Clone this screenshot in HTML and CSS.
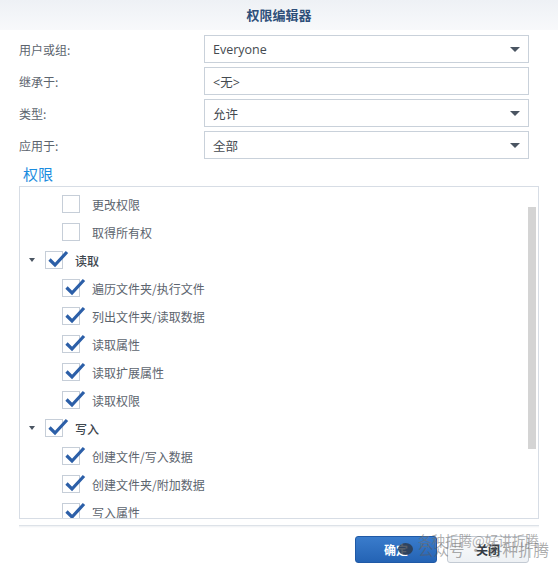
FILE: index.html
```html
<!DOCTYPE html>
<html lang="zh">
<head>
<meta charset="utf-8">
<title>权限编辑器</title>
<link rel="stylesheet" href="styles.css">
</head>
<body>
<div class="dialog">
  <div class="header">权限编辑器</div>
  <div class="form">
    <div class="label">用户或组:</div>
    <div class="field select"><span>Everyone</span><i class="caret"></i></div>
    <div class="label">继承于:</div>
    <div class="field"><span>&lt;无&gt;</span></div>
    <div class="label">类型:</div>
    <div class="field select"><span>允许</span><i class="caret"></i></div>
    <div class="label">应用于:</div>
    <div class="field select"><span>全部</span><i class="caret"></i></div>
  </div>
  <div class="section-title">权限</div>
  <div class="panel">
    <div class="list">
      <div class="row child"><span class="box"></span><span class="txt">更改权限</span></div>
      <div class="row child"><span class="box"></span><span class="txt">取得所有权</span></div>
      <div class="row parent"><i class="toggle"></i><span class="box checked"><svg viewBox="0 0 22 18"><path d="M2.5 9.5 L8 15 L20 2"/></svg></span><span class="txt">读取</span></div>
      <div class="row child"><span class="box checked"><svg viewBox="0 0 22 18"><path d="M2.5 9.5 L8 15 L20 2"/></svg></span><span class="txt">遍历文件夹/执行文件</span></div>
      <div class="row child"><span class="box checked"><svg viewBox="0 0 22 18"><path d="M2.5 9.5 L8 15 L20 2"/></svg></span><span class="txt">列出文件夹/读取数据</span></div>
      <div class="row child"><span class="box checked"><svg viewBox="0 0 22 18"><path d="M2.5 9.5 L8 15 L20 2"/></svg></span><span class="txt">读取属性</span></div>
      <div class="row child"><span class="box checked"><svg viewBox="0 0 22 18"><path d="M2.5 9.5 L8 15 L20 2"/></svg></span><span class="txt">读取扩展属性</span></div>
      <div class="row child"><span class="box checked"><svg viewBox="0 0 22 18"><path d="M2.5 9.5 L8 15 L20 2"/></svg></span><span class="txt">读取权限</span></div>
      <div class="row parent"><i class="toggle"></i><span class="box checked"><svg viewBox="0 0 22 18"><path d="M2.5 9.5 L8 15 L20 2"/></svg></span><span class="txt">写入</span></div>
      <div class="row child"><span class="box checked"><svg viewBox="0 0 22 18"><path d="M2.5 9.5 L8 15 L20 2"/></svg></span><span class="txt">创建文件/写入数据</span></div>
      <div class="row child"><span class="box checked"><svg viewBox="0 0 22 18"><path d="M2.5 9.5 L8 15 L20 2"/></svg></span><span class="txt">创建文件夹/附加数据</span></div>
      <div class="row child"><span class="box checked"><svg viewBox="0 0 22 18"><path d="M2.5 9.5 L8 15 L20 2"/></svg></span><span class="txt">写入属性</span></div>
    </div>
    <div class="track"><div class="thumb"></div></div>
  </div>
  <div class="footer">
    <button class="btn primary">确定</button>
    <button class="btn">关闭</button>
    <div class="watermark">
      <span class="wm-icon"></span>
      <span class="wm-big">公众号 · 各种折腾</span>
      <span class="wm-small">各种折腾@好讲折腾</span>
    </div>
  </div>
</div>
</body>
</html>
```

FILE: styles.css
```css
* { box-sizing: border-box; }
html, body { margin: 0; padding: 0; }
body {
  width: 558px;
  height: 572px;
  overflow: hidden;
  background: #ffffff;
  font-family: "Open Sans", "Noto Sans CJK SC", sans-serif;
  font-size: 12px;
  color: #505a64;
}
.dialog { display: flex; flex-direction: column; height: 572px; }
.header {
  height: 30px;
  line-height: 30px;
  text-align: center;
  font-family: "Noto Sans CJK SC", sans-serif;
  font-weight: bold;
  font-size: 13px;
  color: #2e4f7a;
  background: linear-gradient(#eef1f5, #f8f9fb);
}
.form {
  display: grid;
  grid-template-columns: 185px 325px;
  grid-auto-rows: 28px;
  row-gap: 4px;
  padding: 5px 29px 0 19px;
}
.label {
  display: flex;
  align-items: center;
  font-family: "Noto Sans CJK SC", sans-serif;
  color: #5c646e;
}
.field {
  display: flex;
  align-items: center;
  justify-content: space-between;
  border: 1px solid #c9d1da;
  padding: 0 8px 0 8px;
  color: #444a50;
  font-size: 12.5px;
  background: #fff;
}
.caret {
  width: 0; height: 0;
  border-left: 5px solid transparent;
  border-right: 5px solid transparent;
  border-top: 5px solid #4a5562;
}
.section-title {
  margin: 3px 0 0 23px;
  height: 24px;
  line-height: 24px;
  font-family: "Noto Sans CJK SC", sans-serif;
  font-size: 15px;
  color: #1a8ce0;
}
.panel {
  margin: 0 19px;
  height: 333px;
  border: 1px solid #d7dde5;
  display: flex;
  overflow: hidden;
}
.list { flex: 1; padding-top: 3px; }
.row {
  height: 28px;
  display: flex;
  align-items: center;
  font-family: "Noto Sans CJK SC", sans-serif;
  color: #5c646e;
}
.row.child { padding-left: 42px; }
.row.parent { padding-left: 9px; }
.row.parent .txt { color: #3f4850; font-weight: 500; }
.toggle {
  width: 0; height: 0;
  border-left: 3.5px solid transparent;
  border-right: 3.5px solid transparent;
  border-top: 4px solid #4a5562;
  margin-right: 10px;
}
.box {
  position: relative;
  width: 18px;
  height: 18px;
  border: 1px solid #c6ced8;
  background: #fff;
  margin-right: 12px;
  flex: none;
}
.box svg {
  position: absolute;
  left: 1px;
  top: -2px;
  width: 22px;
  height: 18px;
  overflow: visible;
}
.box svg path {
  fill: none;
  stroke: #2c5fa8;
  stroke-width: 3.2;
  stroke-linejoin: miter;
}
.track { width: 9px; margin-right: 1px; padding-top: 20px; }
.thumb { width: 8px; height: 242px; background: #d4d4d4; }
.footer {
  position: relative;
  margin: 6px 19px 0;
  border-top: 1px solid #dde2e8;
  box-shadow: inset 0 2px 2px -1px #eef0f3;
  padding: 10px 10px 0 0;
  display: flex;
  justify-content: flex-end;
  gap: 10px;
}
.btn {
  width: 82px;
  height: 27px;
  border-radius: 3px;
  font-family: "Noto Sans CJK SC", sans-serif;
  font-size: 12px;
  font-weight: bold;
  border: 1px solid #c3cad3;
  background: linear-gradient(#fbfcfd, #eef1f4);
  color: #333b44;
  padding: 0;
}
.btn.primary {
  border-color: #1f59a6;
  background: linear-gradient(#3a7ccc, #2463b4);
  color: #ffffff;
}
.watermark {
  position: absolute;
  left: 376px;
  top: 8px;
  width: 170px;
  height: 30px;
  pointer-events: none;
  font-family: "Noto Sans CJK SC", sans-serif;
}
.wm-icon {
  position: absolute;
  left: 3px;
  top: 9px;
  width: 15px;
  height: 12px;
  border-radius: 50%;
  background: rgba(45, 55, 70, 0.8);
}
.wm-big {
  position: absolute;
  left: 23px;
  top: 4px;
  font-size: 15.5px;
  white-space: nowrap;
  color: rgba(90, 90, 90, 0.5);
}
.wm-small {
  position: absolute;
  left: 23px;
  top: -4px;
  font-size: 13.5px;
  white-space: nowrap;
  color: rgba(110, 110, 110, 0.55);
}
```
